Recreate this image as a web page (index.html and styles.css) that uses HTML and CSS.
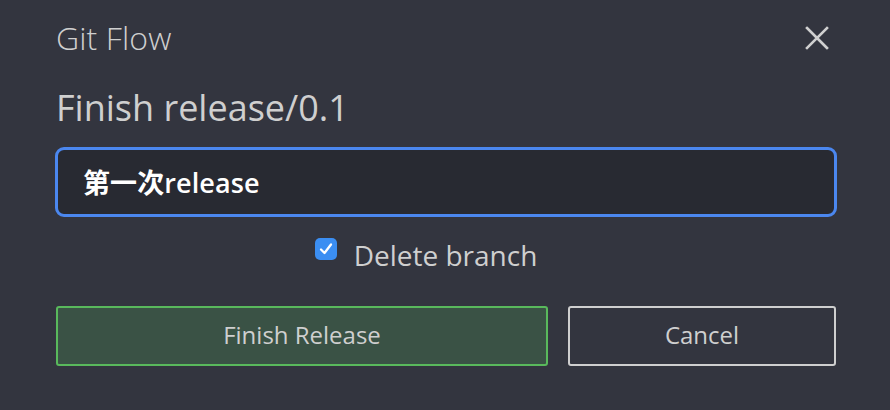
FILE: index.html
```html
<!DOCTYPE html>
<html>
<head>
<meta charset="utf-8">
<link rel="stylesheet" href="styles.css">
</head>
<body>
<div class="dialog">
  <div class="header">
    <div class="app-title">Git Flow</div>
    <button class="close" aria-label="Close">
      <svg width="24" height="24" viewBox="0 0 24 24"><path d="M2 2 L22 22 M22 2 L2 22" stroke="#d0d0d0" stroke-width="2.6" stroke-linecap="square" fill="none"/></svg>
    </button>
  </div>
  <div class="heading">Finish release/0.1</div>
  <div class="input">第一次release</div>
  <label class="check-row">
    <span class="checkbox">
      <svg width="16" height="16" viewBox="0 0 16 16"><path d="M3 8.5 L6.5 12 L13 3.5" stroke="#fff" stroke-width="2.3" fill="none" stroke-linecap="round" stroke-linejoin="round"/></svg>
    </span>
    <span class="check-label">Delete branch</span>
  </label>
  <div class="buttons">
    <button class="btn btn-primary">Finish Release</button>
    <button class="btn btn-cancel">Cancel</button>
  </div>
</div>
</body>
</html>
```

FILE: styles.css
```css
html, body {
  margin: 0;
  padding: 0;
  background: #33353f;
  width: 890px;
  height: 410px;
  overflow: hidden;
}
.dialog {
  font-family: "Open Sans", "Noto Sans CJK SC", sans-serif;
  padding: 18px 53px 0 55px;
  box-sizing: border-box;
  display: flex;
  flex-direction: column;
}
.header {
  display: flex;
  justify-content: space-between;
  align-items: center;
  height: 40px;
}
.app-title {
  font-size: 32px;
  font-weight: 300;
  color: #cfcfcf;
  padding-left: 1px;
  letter-spacing: 0.1px;
  margin-top: -2px;
}
.close {
  background: none;
  border: none;
  padding: 0;
  margin-right: 8px;
  width: 24px;
  height: 24px;
  display: flex;
}
.heading {
  margin-top: 28px;
  font-size: 36px;
  font-weight: 400;
  color: #cfcfcf;
  padding-left: 1px;
  line-height: 44px;
  letter-spacing: 0;
}
.input {
  margin-top: 17px;
  height: 70px;
  box-sizing: border-box;
  border: 3px solid #4b87ef;
  border-radius: 9px;
  background: #282a32;
  color: #ffffff;
  font-size: 27px;
  font-weight: 600;
  letter-spacing: 0.1px;
  display: flex;
  align-items: center;
  padding-left: 25px;
  padding-bottom: 2px;
}
.check-row {
  margin-top: 20px;
  display: flex;
  align-items: center;
  justify-content: center;
  gap: 17px;
  height: 36px;
  padding-right: 40px;
}
.checkbox {
  width: 22px;
  height: 22px;
  border-radius: 5px;
  background: #3b8ef2;
  display: flex;
  align-items: center;
  justify-content: center;
  margin-top: -12px;
}
.check-label {
  font-size: 28px;
  color: #cfcfcf;
}
.buttons {
  margin-top: 33px;
  display: flex;
  gap: 20px;
}
.btn {
  height: 60px;
  font-family: "Open Sans", sans-serif;
  font-size: 24px;
  color: #cfcfcf;
  border-radius: 3px;
  box-sizing: border-box;
  padding: 0 0 3px 0;
}
.btn-primary {
  width: 492px;
  margin-left: 1px;
  background: #3a5245;
  border: 2px solid #59b95c;
}
.btn-cancel {
  width: 268px;
  background: transparent;
  border: 2px solid #cfcfcf;
}
```
